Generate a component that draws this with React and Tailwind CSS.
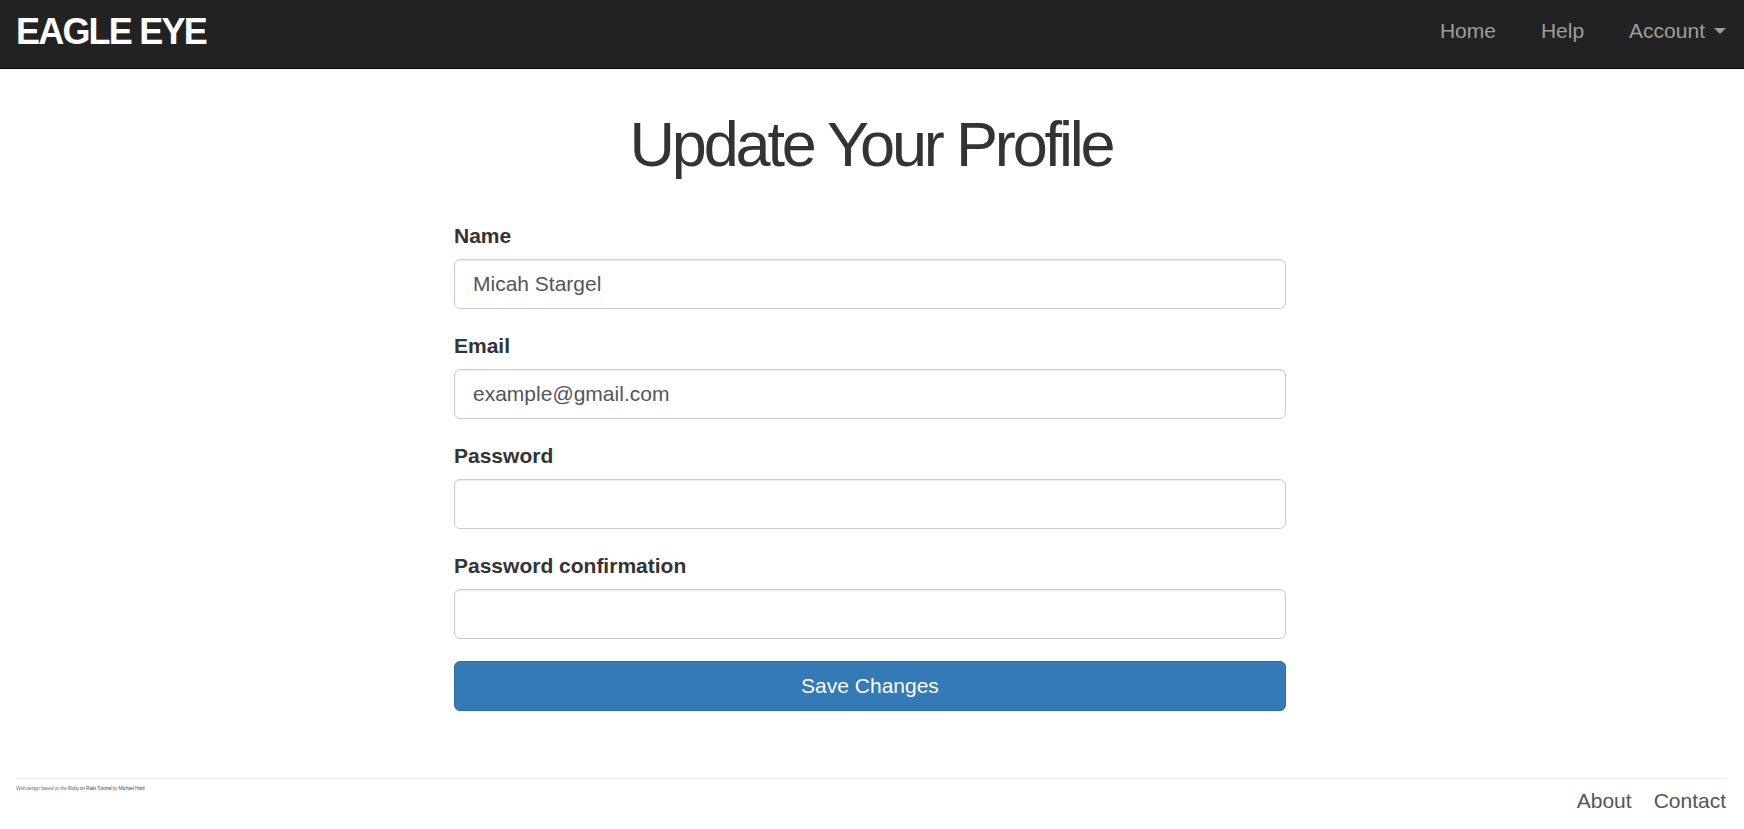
import React from "react";

const fields = [
  { id: "name", label: "Name", type: "text", value: "Micah Stargel" },
  { id: "email", label: "Email", type: "email", value: "example@gmail.com" },
  { id: "password", label: "Password", type: "password", value: "" },
  { id: "confirmation", label: "Password confirmation", type: "password", value: "" },
];

function Header() {
  return (
    <header className="flex items-start justify-between border-b border-[#080808] bg-[#222222] pb-5 pl-4 pr-[18px] pt-4">
      <a href="#" className="text-[36px] font-bold leading-[32px] tracking-tighter text-white">
        EAGLE EYE
      </a>
      <nav className="flex gap-[45px] leading-[30px] text-[#9d9d9d]">
        <a href="#">Home</a>
        <a href="#">Help</a>
        <button type="button" className="flex items-center gap-[9px]">
          Account
          <span className="border-x-[6px] border-t-[6px] border-x-transparent border-t-[#9d9d9d]" />
        </button>
      </nav>
    </header>
  );
}

function Field({ id, label, type, value }) {
  return (
    <div className="flex flex-col gap-2">
      <label htmlFor={id} className="font-bold leading-[30px]">
        {label}
      </label>
      <input
        id={id}
        type={type}
        defaultValue={value}
        className="h-[50px] w-full rounded-md border border-[#cccccc] bg-white px-[18px] text-[#555555] shadow-[inset_0_1px_2px_rgba(0,0,0,0.08)]"
      />
    </div>
  );
}

export default function App() {
  return (
    <div className="min-h-screen bg-white font-['Liberation_Sans',Arial,sans-serif] text-[21px] text-[#333333]">
      <Header />
      <div className="pl-4 pr-[18px]">
        <main className="pt-11">
          <h1 className="text-center text-[63px] leading-[63px] tracking-tighter">Update Your Profile</h1>
          <div className="-ml-[22px] -mr-5 flex justify-center pt-[45px]">
            <form className="flex w-1/2 flex-col gap-[22px] px-[22px]">
              {fields.map((field) => (
                <Field key={field.id} {...field} />
              ))}
              <button
                type="submit"
                className="h-[50px] rounded-md border border-[#2e6da4] bg-[#337ab7] text-white"
              >
                Save Changes
              </button>
            </form>
          </div>
        </main>
        <footer className="mt-[67px] flex items-start justify-between border-t border-[#eaeaea] pt-[7px] text-[#555555]">
          <small className="text-[5px] leading-[4px] tracking-tighter text-[#777777]">
            Web design based on the <a href="#" className="text-[#555555]">Ruby on Rails Tutorial</a> by{" "}
            <a href="#" className="text-[#555555]">Michael Hartl</a>
          </small>
          <nav className="flex gap-[22px] leading-[30px]">
            <a href="#">About</a>
            <a href="#">Contact</a>
          </nav>
        </footer>
      </div>
    </div>
  );
}
